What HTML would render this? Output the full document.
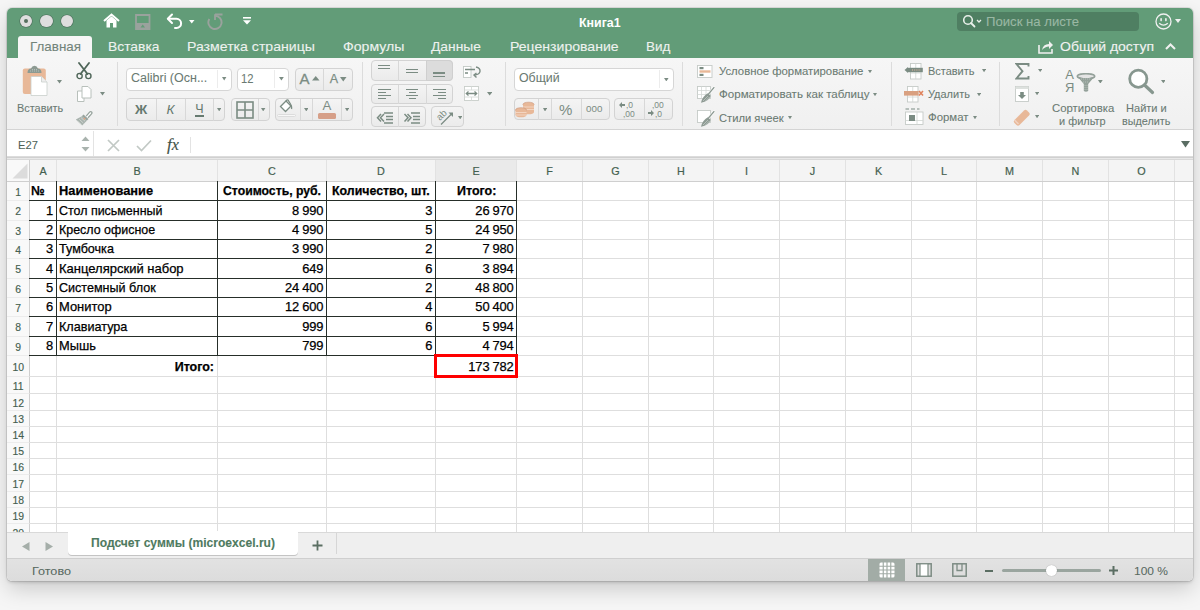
<!DOCTYPE html><html><head><meta charset="utf-8"><style>
html,body{margin:0;padding:0;width:1200px;height:610px;overflow:hidden;background:#f6f6f6;font-family:"Liberation Sans", sans-serif;}
#win{position:absolute;left:7px;top:8px;width:1186px;height:573px;border-radius:5px;box-shadow:0 0 0 1px rgba(0,0,0,0.09),0 2px 3px rgba(0,0,0,0.12),0 8px 22px rgba(0,0,0,0.18);overflow:hidden;background:#fff}
</style></head><body>
<div id="win"></div>

<div style="position:absolute;left:7px;top:8px;width:1186px;height:573px;border-radius:5px;overflow:hidden;">
<div style="position:absolute;left:-7px;top:-8px;width:1200px;height:610px;">
<div style="position:absolute;left:0px;top:0px;width:1200px;height:58px;background:#629c78;"></div>
<div style="position:absolute;left:19.8px;top:14.8px;width:12.4px;height:12.4px;background:#dedede;border-radius:50%;box-shadow:0 0 0 0.6px rgba(60,80,70,0.6);"></div>
<div style="position:absolute;left:40.3px;top:14.8px;width:12.4px;height:12.4px;background:#dedede;border-radius:50%;box-shadow:0 0 0 0.6px rgba(60,80,70,0.6);"></div>
<div style="position:absolute;left:60.8px;top:14.8px;width:12.4px;height:12.4px;background:#dedede;border-radius:50%;box-shadow:0 0 0 0.6px rgba(60,80,70,0.6);"></div>
<div style="position:absolute;left:24px;top:19px;width:4px;height:4px;background:#55705f;border-radius:50%;"></div>
<svg style="position:absolute;left:103px;top:13px;" width="17" height="15" viewBox="0 0 17 15"><path d="M1 8 L8.5 1.5 L16 8" fill="none" stroke="#fff" stroke-width="2"/><path d="M3.5 7.5 V14.5 H7 V10 H10 V14.5 H13.5 V7.5 L8.5 3.2 Z" fill="#fff"/></svg>
<svg style="position:absolute;left:134.5px;top:13.5px;" width="16" height="16" viewBox="0 0 16 16"><path d="M1 1 H14.5 V15 H1 Z" fill="none" stroke="#9aa29d" stroke-width="1.8"/><rect x="1" y="9" width="13.5" height="6" fill="#9aa29d"/><path d="M5.5 13.5 L7.75 10.5 L10 13.5 Z" fill="#629c78"/></svg>
<svg style="position:absolute;left:166px;top:13px;" width="18" height="16" viewBox="0 0 18 16"><path d="M6 1.5 L1.8 5.8 L6 10" fill="none" stroke="#fff" stroke-width="2" stroke-linecap="round" stroke-linejoin="round"/><path d="M2.5 5.8 H10.5 A4.6 4.6 0 0 1 10.5 15 H9" fill="none" stroke="#fff" stroke-width="2" stroke-linecap="round"/></svg>
<svg style="position:absolute;left:189px;top:20px;" width="6" height="4" viewBox="0 0 6 4"><path d="M0 0 H5.5 L2.75 3.5 Z" fill="#fff"/></svg>
<svg style="position:absolute;left:206px;top:13px;" width="18" height="17" viewBox="0 0 18 17"><path d="M9 2.8 A6.6 6.6 0 1 1 3.3 6" fill="none" stroke="#9aa29d" stroke-width="1.9"/><path d="M9 1.5 H16.5 M9 1.2 V7" fill="none" stroke="#9aa29d" stroke-width="1.8"/></svg>
<svg style="position:absolute;left:243px;top:17px;" width="8" height="8" viewBox="0 0 8 8"><rect x="0" y="0" width="8" height="1.6" fill="#fff"/><path d="M0 3.2 H8 L4 7.5 Z" fill="#fff"/></svg>
<div style="position:absolute;left:579.00px;top:12.50px;height:19px;line-height:19px;font-size:13.4px;color:#fff;font-weight:bold;white-space:nowrap;-webkit-text-stroke:0px #fff;transform:scaleX(0.9267);transform-origin:0 0;">Книга1</div>
<div style="position:absolute;left:957px;top:12px;width:182px;height:18.5px;background:#4f7f62;border-radius:4px;"></div>
<svg style="position:absolute;left:962px;top:14px;" width="24" height="14" viewBox="0 0 24 14"><circle cx="6" cy="6" r="4.3" fill="none" stroke="#e8efe9" stroke-width="1.6"/><path d="M9 9 L12.5 12.5" stroke="#e8efe9" stroke-width="1.8" stroke-linecap="round"/><path d="M15 6 L17 8 L19 6" fill="none" stroke="#e8efe9" stroke-width="1.3"/></svg>
<div style="position:absolute;left:986.00px;top:12.50px;height:18px;line-height:18px;font-size:12.6px;color:#9ab8a4;font-weight:normal;white-space:nowrap;-webkit-text-stroke:0.1px #9ab8a4;transform:scaleX(1.0425);transform-origin:0 0;">Поиск на листе</div>
<svg style="position:absolute;left:1155px;top:13px;" width="17" height="17" viewBox="0 0 17 17"><circle cx="8.5" cy="8.5" r="7.5" fill="none" stroke="#f0f0f0" stroke-width="1.3"/><rect x="5.3" y="5" width="1.6" height="3.4" rx="0.8" fill="#f0f0f0"/><rect x="10.1" y="5" width="1.6" height="3.4" rx="0.8" fill="#f0f0f0"/><path d="M4.2 10.3 Q8.5 14 12.8 10.3" fill="none" stroke="#f0f0f0" stroke-width="1.3"/></svg>
<svg style="position:absolute;left:1175px;top:19px;" width="6" height="5" viewBox="0 0 6 5"><path d="M0 0 H6 L3 4 Z" fill="#f0f0f0"/></svg>
<div style="position:absolute;left:18px;top:36px;width:74px;height:23px;background:#f6f6f6;border-radius:3px 3px 0 0;"></div>
<div style="position:absolute;left:29.50px;top:38.30px;height:18px;line-height:18px;font-size:12.6px;color:#72847a;font-weight:normal;white-space:nowrap;-webkit-text-stroke:0.1px #72847a;transform:scaleX(1.0635);transform-origin:0 0;">Главная</div>
<div style="position:absolute;left:107.50px;top:38.30px;height:18px;line-height:18px;font-size:12.6px;color:#eef2ef;font-weight:normal;white-space:nowrap;-webkit-text-stroke:0.1px #eef2ef;transform:scaleX(1.0993);transform-origin:0 0;">Вставка</div>
<div style="position:absolute;left:187.00px;top:38.30px;height:18px;line-height:18px;font-size:12.6px;color:#eef2ef;font-weight:normal;white-space:nowrap;-webkit-text-stroke:0.1px #eef2ef;transform:scaleX(1.1198);transform-origin:0 0;">Разметка страницы</div>
<div style="position:absolute;left:342.50px;top:38.30px;height:18px;line-height:18px;font-size:12.6px;color:#eef2ef;font-weight:normal;white-space:nowrap;-webkit-text-stroke:0.1px #eef2ef;transform:scaleX(1.1215);transform-origin:0 0;">Формулы</div>
<div style="position:absolute;left:431.00px;top:38.30px;height:18px;line-height:18px;font-size:12.6px;color:#eef2ef;font-weight:normal;white-space:nowrap;-webkit-text-stroke:0.1px #eef2ef;transform:scaleX(1.0983);transform-origin:0 0;">Данные</div>
<div style="position:absolute;left:509.70px;top:38.30px;height:18px;line-height:18px;font-size:12.6px;color:#eef2ef;font-weight:normal;white-space:nowrap;-webkit-text-stroke:0.1px #eef2ef;transform:scaleX(1.1172);transform-origin:0 0;">Рецензирование</div>
<div style="position:absolute;left:646.20px;top:38.30px;height:18px;line-height:18px;font-size:12.6px;color:#eef2ef;font-weight:normal;white-space:nowrap;-webkit-text-stroke:0.1px #eef2ef;transform:scaleX(1.0705);transform-origin:0 0;">Вид</div>
<svg style="position:absolute;left:1038px;top:39px;" width="16" height="15" viewBox="0 0 16 15"><path d="M1 6 V14 H14 V10" fill="none" stroke="#f0f0f0" stroke-width="1.6"/><path d="M4 11 Q5 5 11 5 V2 L15 6 L11 10 V7.5 Q7 7.5 4 11 Z" fill="#f0f0f0"/></svg>
<div style="position:absolute;left:1060.00px;top:38.30px;height:18px;line-height:18px;font-size:12.8px;color:#f2f2f2;font-weight:normal;white-space:nowrap;-webkit-text-stroke:0.12px #f2f2f2;transform:scaleX(1.0930);transform-origin:0 0;">Общий доступ</div>
<svg style="position:absolute;left:1165px;top:43px;" width="11" height="7" viewBox="0 0 11 7"><path d="M1 6 L5.5 1.5 L10 6" fill="none" stroke="#f0f0f0" stroke-width="2"/></svg>
<div style="position:absolute;left:0px;top:58px;width:1200px;height:72px;background:#f3f3f3;border-bottom:1px solid #d6d6d6;"></div>
<div style="position:absolute;left:0px;top:58px;width:1200px;height:71.5px;background:linear-gradient(#f6f6f6,#f0f0f0);"></div>
<div style="position:absolute;left:0px;top:129px;width:1200px;height:1px;background:#d4d4d4;"></div>
<svg style="position:absolute;left:22px;top:65px;" width="26" height="32" viewBox="0 0 26 32">
<rect x="0.8" y="3.5" width="23" height="25.5" rx="2" fill="#e8b898"/>
<path d="M5.5 8 Q5.5 3.5 9 3.5 Q10 0.8 12.5 0.8 Q15 0.8 16 3.5 Q19.5 3.5 19.5 8 Z" fill="#8c9a92"/><path d="M8 6 H17 M10 4.5 H15" stroke="#c8d0cb" stroke-width="0.7" stroke-dasharray="1 1"/>
<path d="M9 11.5 H19.5 L25 17 V30.5 H9 Z" fill="#fff" stroke="#c9cfcb" stroke-width="0.8"/>
<path d="M19.5 11.5 V17 H25" fill="#eee" stroke="#c9cfcb" stroke-width="0.8"/>
</svg>
<svg style="position:absolute;left:57px;top:80px;" width="5" height="3.6" viewBox="0 0 5 3.6"><path d="M0 0 H5 L2.5 3.6 Z" fill="#7b8c83"/></svg>
<div style="position:absolute;left:16.80px;top:101.30px;height:15px;line-height:15px;font-size:10.5px;color:#6a7a72;font-weight:normal;white-space:nowrap;-webkit-text-stroke:0.08px #6a7a72;transform:scaleX(1.0380);transform-origin:0 0;">Вставить</div>
<svg style="position:absolute;left:76px;top:62px;" width="16" height="18" viewBox="0 0 16 18">
<path d="M3 1 L11.5 12 M13 1 L4.5 12" stroke="#4f6659" stroke-width="1.8" stroke-linecap="round"/>
<circle cx="3.6" cy="14" r="2.6" fill="none" stroke="#4f6659" stroke-width="1.4"/>
<circle cx="12.4" cy="14" r="2.6" fill="none" stroke="#4f6659" stroke-width="1.4"/>
</svg>
<svg style="position:absolute;left:76px;top:85px;" width="17" height="18" viewBox="0 0 17 18">
<path d="M1.5 6 H8 V16.5 H1.5 Z" fill="#fff" stroke="#b8c0bb" stroke-width="1"/>
<path d="M6 1.5 H12 L15 4.5 V13 H6 Z" fill="#fff" stroke="#b8c0bb" stroke-width="1"/>
</svg>
<svg style="position:absolute;left:99.5px;top:92px;" width="5" height="3.6" viewBox="0 0 5 3.6"><path d="M0 0 H5 L2.5 3.6 Z" fill="#7b8c83"/></svg>
<svg style="position:absolute;left:75px;top:109px;" width="18" height="17" viewBox="0 0 18 17">
<path d="M11.2 7.2 L14.6 3.2 Q15.6 2 16.6 3 Q17.4 3.9 16.5 4.9 L13 8.8" fill="#fff" stroke="#98a49e" stroke-width="1.3"/>
<path d="M8.5 5.5 L13.5 10 L11.8 11.8 L6.8 7.2 Z" fill="#98a49e"/>
<path d="M6.8 7.2 L11.8 11.8 L7.2 16.5 L0.8 10.5 Z" fill="#a9b3ae"/>
<path d="M2.5 12 L6.5 15.5 M4.2 10.2 L8.3 14 M6 8.6 L10 12.2" stroke="#d5dad7" stroke-width="0.8"/>
<circle cx="9.5" cy="9.6" r="0.9" fill="#e8a27e"/>
</svg>
<div style="position:absolute;left:116.5px;top:62px;width:1px;height:64px;background:#dcdcdc;"></div>
<div style="position:absolute;left:126px;top:67.5px;width:105.5px;height:23px;background:#fff;border:1px solid #d6d6d6;border-radius:4px;box-sizing:border-box;"></div>
<div style="position:absolute;left:131.00px;top:70.40px;height:17px;line-height:17px;font-size:12px;color:#6a7a72;font-weight:normal;white-space:nowrap;-webkit-text-stroke:0.05px #6a7a72;transform:scaleX(1.0410);transform-origin:0 0;">Calibri (Осн...</div>
<div style="position:absolute;left:217px;top:70px;width:1px;height:18px;background:#ececec;"></div>
<svg style="position:absolute;left:222.3px;top:77.3px;" width="4.4" height="3.4" viewBox="0 0 4.4 3.4"><path d="M0 0 H4.4 L2.2 3.4 Z" fill="#7b8c83"/></svg>
<div style="position:absolute;left:236.5px;top:67.5px;width:52px;height:23px;background:#fff;border:1px solid #d6d6d6;border-radius:4px;box-sizing:border-box;"></div>
<div style="position:absolute;left:240.80px;top:70.50px;height:17px;line-height:17px;font-size:12px;color:#6a7a72;font-weight:normal;white-space:nowrap;-webkit-text-stroke:0.05px #6a7a72;transform:scaleX(0.9368);transform-origin:0 0;">12</div>
<div style="position:absolute;left:274.4px;top:70px;width:1px;height:18px;background:#ececec;"></div>
<svg style="position:absolute;left:279.3px;top:77px;" width="4.8" height="3.6" viewBox="0 0 4.8 3.6"><path d="M0 0 H4.8 L2.4 3.6 Z" fill="#7b8c83"/></svg>
<div style="position:absolute;left:294.5px;top:67.5px;width:58px;height:23px;background:linear-gradient(#f4f4f4,#ebebeb);border:1px solid #d3d3d3;border-radius:4px;box-sizing:border-box;"></div>
<div style="position:absolute;left:323.4px;top:68px;width:1px;height:22px;background:#d8d8d8;"></div>
<div style="position:absolute;left:4.5px;width:600px;text-align:center;top:68.1px;height:21px;line-height:21px;font-size:15px;color:#7b8c83;font-weight:normal;white-space:nowrap;-webkit-text-stroke:0.3px #7b8c83;">A</div>
<svg style="position:absolute;left:311.5px;top:75.8px;" width="8" height="5" viewBox="0 0 8 5"><path d="M0 4.5 H7.5 L3.75 0 Z" fill="#7b8c83"/></svg>
<div style="position:absolute;left:34px;width:600px;text-align:center;top:70.0px;height:18px;line-height:18px;font-size:12.5px;color:#7b8c83;font-weight:normal;white-space:nowrap;-webkit-text-stroke:0.25px #7b8c83;">A</div>
<svg style="position:absolute;left:339.8px;top:76.5px;" width="7" height="5" viewBox="0 0 7 5"><path d="M0 0 H6.5 L3.25 4.5 Z" fill="#7b8c83"/></svg>
<div style="position:absolute;left:126px;top:97.8px;width:98.5px;height:23px;background:linear-gradient(#f4f4f4,#ebebeb);border:1px solid #d3d3d3;border-radius:4px;box-sizing:border-box;"></div>
<div style="position:absolute;left:155.5px;top:98.5px;width:1px;height:22.0px;background:#d8d8d8;"></div>
<div style="position:absolute;left:184.5px;top:98.5px;width:1px;height:22.0px;background:#d8d8d8;"></div>
<div style="position:absolute;left:212.9px;top:98.5px;width:1px;height:22.0px;background:#d8d8d8;"></div>
<div style="position:absolute;left:-159px;width:600px;text-align:center;top:99.8px;height:19px;line-height:19px;font-size:13.5px;color:#667a70;font-weight:bold;white-space:nowrap;">Ж</div>
<div style="position:absolute;left:-129.5px;width:600px;text-align:center;top:99.8px;height:19px;line-height:19px;font-size:13.5px;color:#667a70;font-weight:normal;white-space:nowrap;font-style:italic;">К</div>
<div style="position:absolute;left:-100.5px;width:600px;text-align:center;top:99.5px;height:18px;line-height:18px;font-size:12.5px;color:#667a70;font-weight:normal;white-space:nowrap;">Ч</div>
<div style="position:absolute;left:195px;top:115.3px;width:9px;height:1.3px;background:#667a70;"></div>
<svg style="position:absolute;left:217px;top:107.5px;" width="4.4" height="3.4" viewBox="0 0 4.4 3.4"><path d="M0 0 H4.4 L2.2 3.4 Z" fill="#7b8c83"/></svg>
<div style="position:absolute;left:231px;top:98px;width:38.5px;height:22.5px;background:linear-gradient(#f4f4f4,#ebebeb);border:1px solid #d3d3d3;border-radius:4px;box-sizing:border-box;"></div>
<svg style="position:absolute;left:236px;top:100.5px;" width="18" height="18" viewBox="0 0 18 18"><rect x="1" y="1" width="16" height="16" fill="none" stroke="#7b8c83" stroke-width="1.6"/><path d="M9 1 V17 M1 9 H17" stroke="#7b8c83" stroke-width="1.6"/></svg>
<div style="position:absolute;left:257.6px;top:99px;width:1px;height:21px;background:#d8d8d8;"></div>
<svg style="position:absolute;left:261.4px;top:107.5px;" width="4.4" height="3.4" viewBox="0 0 4.4 3.4"><path d="M0 0 H4.4 L2.2 3.4 Z" fill="#7b8c83"/></svg>
<div style="position:absolute;left:275px;top:98px;width:77.5px;height:22.5px;background:linear-gradient(#f4f4f4,#ebebeb);border:1px solid #d3d3d3;border-radius:4px;box-sizing:border-box;"></div>
<svg style="position:absolute;left:278px;top:99px;" width="17" height="14" viewBox="0 0 17 14"><path d="M2.5 7.5 L8 2 L13 7 L7.5 12.5 Z" fill="#fff" stroke="#7b8c83" stroke-width="1.3"/><path d="M8 2 Q9 0.5 10 1 L12.5 5 Q14 7.5 13.5 10" fill="none" stroke="#7b8c83" stroke-width="1.3"/></svg>
<div style="position:absolute;left:277px;top:113.6px;width:18.5px;height:3.8px;background:#f7f7f7;border:1px solid #dcdcdc;border-radius:1.5px;box-sizing:border-box;"></div>
<div style="position:absolute;left:300.2px;top:99px;width:1px;height:21px;background:#d8d8d8;"></div>
<svg style="position:absolute;left:303.7px;top:107.5px;" width="4.6" height="3.4" viewBox="0 0 4.6 3.4"><path d="M0 0 H4.6 L2.3 3.4 Z" fill="#7b8c83"/></svg>
<div style="position:absolute;left:312.3px;top:99px;width:1px;height:21px;background:#d8d8d8;"></div>
<div style="position:absolute;left:26.80000000000001px;width:600px;text-align:center;top:97.2px;height:18px;line-height:18px;font-size:13.2px;color:#7b8c83;font-weight:normal;white-space:nowrap;">A</div>
<div style="position:absolute;left:317.8px;top:113px;width:17.8px;height:5.5px;background:#d69f88;border-radius:1.5px;"></div>
<div style="position:absolute;left:340.5px;top:99px;width:1px;height:21px;background:#d8d8d8;"></div>
<svg style="position:absolute;left:344.6px;top:107.5px;" width="4.2" height="3.4" viewBox="0 0 4.2 3.4"><path d="M0 0 H4.2 L2.1 3.4 Z" fill="#7b8c83"/></svg>
<div style="position:absolute;left:362px;top:62px;width:1px;height:64px;background:#dcdcdc;"></div>
<div style="position:absolute;left:371px;top:60.4px;width:81.6px;height:20.8px;background:linear-gradient(#f4f4f4,#ebebeb);border:1px solid #d3d3d3;border-radius:4px;box-sizing:border-box;"></div>
<div style="position:absolute;left:425.5px;top:60.4px;width:27.1px;height:20.8px;background:#dcdcdc;border:1px solid #cfcfcf;border-radius:0 4px 4px 0;box-sizing:border-box;"></div>
<div style="position:absolute;left:398px;top:61px;width:1px;height:19.5px;background:#d8d8d8;"></div>
<div style="position:absolute;left:378.2px;top:64.6px;width:12.2px;height:1.4px;background:#7b8c83;"></div>
<div style="position:absolute;left:378.2px;top:67.7px;width:12.2px;height:1.4px;background:#7b8c83;"></div>
<div style="position:absolute;left:405.7px;top:68.8px;width:12.2px;height:1.4px;background:#7b8c83;"></div>
<div style="position:absolute;left:405.7px;top:71.8px;width:12.2px;height:1.4px;background:#7b8c83;"></div>
<div style="position:absolute;left:433px;top:72.39999999999999px;width:12.2px;height:1.4px;background:#7b8c83;"></div>
<div style="position:absolute;left:433px;top:75.6px;width:12.2px;height:1.4px;background:#7b8c83;"></div>
<div style="position:absolute;left:371px;top:83.7px;width:81.6px;height:20.5px;background:linear-gradient(#f4f4f4,#ebebeb);border:1px solid #d3d3d3;border-radius:4px;box-sizing:border-box;"></div>
<div style="position:absolute;left:398px;top:84.5px;width:1px;height:19.0px;background:#d8d8d8;"></div>
<div style="position:absolute;left:425.5px;top:84.5px;width:1px;height:19.0px;background:#d8d8d8;"></div>
<div style="position:absolute;left:378px;top:88.6px;width:13px;height:1.4px;background:#7b8c83;"></div>
<div style="position:absolute;left:406.0px;top:88.6px;width:12px;height:1.4px;background:#7b8c83;"></div>
<div style="position:absolute;left:432.5px;top:88.6px;width:13px;height:1.4px;background:#7b8c83;"></div>
<div style="position:absolute;left:378px;top:91.7px;width:8px;height:1.4px;background:#7b8c83;"></div>
<div style="position:absolute;left:408.5px;top:91.7px;width:7px;height:1.4px;background:#7b8c83;"></div>
<div style="position:absolute;left:437.5px;top:91.7px;width:8px;height:1.4px;background:#7b8c83;"></div>
<div style="position:absolute;left:378px;top:94.8px;width:13px;height:1.4px;background:#7b8c83;"></div>
<div style="position:absolute;left:406.0px;top:94.8px;width:12px;height:1.4px;background:#7b8c83;"></div>
<div style="position:absolute;left:432.5px;top:94.8px;width:13px;height:1.4px;background:#7b8c83;"></div>
<div style="position:absolute;left:378px;top:97.8px;width:8px;height:1.4px;background:#7b8c83;"></div>
<div style="position:absolute;left:408.5px;top:97.8px;width:7px;height:1.4px;background:#7b8c83;"></div>
<div style="position:absolute;left:437.5px;top:97.8px;width:8px;height:1.4px;background:#7b8c83;"></div>
<div style="position:absolute;left:371px;top:106.4px;width:54.5px;height:20.8px;background:linear-gradient(#f4f4f4,#ebebeb);border:1px solid #d3d3d3;border-radius:4px;box-sizing:border-box;"></div>
<div style="position:absolute;left:398px;top:107px;width:1px;height:19.5px;background:#d8d8d8;"></div>
<svg style="position:absolute;left:376px;top:109px;" width="18" height="15" viewBox="0 0 18 15"><path d="M8 4 H17 M10 7.5 H17 M10 10.5 H17 M8 14 H17" stroke="#7b8c83" stroke-width="1.4"/>
<path d="M5 5 L1.5 8.8 L5 12.6 M8 5 L4.5 8.8 L8 12.6" fill="none" stroke="#7b8c83" stroke-width="1.5"/></svg>
<svg style="position:absolute;left:403px;top:109px;" width="18" height="15" viewBox="0 0 18 15"><path d="M8 4 H17 M10 7.5 H17 M10 10.5 H17 M8 14 H17" stroke="#7b8c83" stroke-width="1.4"/>
<path d="M1.5 5 L5 8.8 L1.5 12.6 M4.5 5 L8 8.8 L4.5 12.6" fill="none" stroke="#7b8c83" stroke-width="1.5"/></svg>
<div style="position:absolute;left:430.5px;top:106.4px;width:33.8px;height:20.8px;background:linear-gradient(#f4f4f4,#ebebeb);border:1px solid #d3d3d3;border-radius:4px;box-sizing:border-box;"></div>
<svg style="position:absolute;left:435px;top:108px;" width="22" height="18" viewBox="0 0 22 18"><text x="0" y="0" transform="translate(5,13) rotate(-45)" font-family="Liberation Sans" font-size="9.5" fill="#7b8c83">ab</text>
<path d="M6 16.5 L16.5 6" stroke="#7b8c83" stroke-width="1.3"/><path d="M13.5 4.5 H18 V9 Z" fill="#7b8c83"/></svg>
<svg style="position:absolute;left:458px;top:115.5px;" width="4.4" height="3.4" viewBox="0 0 4.4 3.4"><path d="M0 0 H4.4 L2.2 3.4 Z" fill="#7b8c83"/></svg>
<svg style="position:absolute;left:462.5px;top:65.5px;" width="19" height="12" viewBox="0 0 19 12"><rect x="0.5" y="0.5" width="7.5" height="11" fill="#fff" stroke="#c2c9c5" stroke-width="0.9"/>
<path d="M2 3.5 H12 M2 7 H5" stroke="#7b8c83" stroke-width="1.3"/>
<path d="M13 1 Q17.5 2 17 5.5 Q16.5 8.5 12 9" fill="none" stroke="#7b8c83" stroke-width="1.4"/><path d="M13.5 7 L11 9 L13.5 11.5" fill="none" stroke="#7b8c83" stroke-width="1.4"/></svg>
<svg style="position:absolute;left:464px;top:86px;" width="15" height="15" viewBox="0 0 15 15"><rect x="0.5" y="0.5" width="14" height="14" fill="#fff" stroke="#c8cec9" stroke-width="0.9"/>
<path d="M7.5 0.5 V4 M7.5 11 V14.5 M0.5 11 H14.5 M0.5 4 H14.5" stroke="#d7dbd8" stroke-width="0.9"/>
<path d="M3 7.5 H12" stroke="#7b8c83" stroke-width="1.4"/><path d="M4.5 5.5 L2.3 7.5 L4.5 9.5 M10.5 5.5 L12.7 7.5 L10.5 9.5" fill="none" stroke="#7b8c83" stroke-width="1.3"/></svg>
<svg style="position:absolute;left:486.6px;top:92.2px;" width="5.3" height="3.6" viewBox="0 0 5.3 3.6"><path d="M0 0 H5.3 L2.65 3.6 Z" fill="#7b8c83"/></svg>
<div style="position:absolute;left:504.5px;top:62px;width:1px;height:64px;background:#dcdcdc;"></div>
<div style="position:absolute;left:513.5px;top:67.5px;width:160px;height:23.2px;background:#fff;border:1px solid #d6d6d6;border-radius:4px;box-sizing:border-box;"></div>
<div style="position:absolute;left:518.60px;top:70.30px;height:17px;line-height:17px;font-size:12px;color:#6a7a72;font-weight:normal;white-space:nowrap;-webkit-text-stroke:0.05px #6a7a72;transform:scaleX(1.0281);transform-origin:0 0;">Общий</div>
<div style="position:absolute;left:659.4px;top:70px;width:1px;height:18px;background:#ececec;"></div>
<svg style="position:absolute;left:664px;top:77.5px;" width="4.6" height="3.4" viewBox="0 0 4.6 3.4"><path d="M0 0 H4.6 L2.3 3.4 Z" fill="#7b8c83"/></svg>
<div style="position:absolute;left:513.5px;top:97.8px;width:96px;height:22.6px;background:linear-gradient(#f4f4f4,#ebebeb);border:1px solid #d3d3d3;border-radius:4px;box-sizing:border-box;"></div>
<svg style="position:absolute;left:515px;top:101px;" width="20" height="17" viewBox="0 0 20 17"><ellipse cx="13.5" cy="3.5" rx="5.5" ry="2.3" fill="#e8b898" stroke="#c9957a" stroke-width="0.6"/>
<rect x="8" y="3.5" width="11" height="7.5" fill="#e8b898"/><ellipse cx="13.5" cy="11" rx="5.5" ry="2.3" fill="#e8b898"/>
<path d="M8 6 H19 M8 8.5 H19" stroke="#f5dccb" stroke-width="0.8"/>
<ellipse cx="6" cy="9" rx="5.5" ry="2.3" fill="#e8b898" stroke="#c9957a" stroke-width="0.6"/>
<rect x="0.5" y="9" width="11" height="5" fill="#e8b898"/><ellipse cx="6" cy="14" rx="5.5" ry="2.3" fill="#e8b898"/>
<path d="M0.5 11.5 H11.5 M0.5 14 H11.5" stroke="#f5dccb" stroke-width="0.8"/></svg>
<div style="position:absolute;left:538.1px;top:98.5px;width:1px;height:21.5px;background:#d8d8d8;"></div>
<svg style="position:absolute;left:542.8px;top:107.5px;" width="4.1" height="3.6" viewBox="0 0 4.1 3.6"><path d="M0 0 H4.1 L2.05 3.6 Z" fill="#7b8c83"/></svg>
<div style="position:absolute;left:550.9px;top:98.5px;width:1px;height:21.5px;background:#d8d8d8;"></div>
<div style="position:absolute;left:265.6px;width:600px;text-align:center;top:98.8px;height:21px;line-height:21px;font-size:15px;color:#7b8c83;font-weight:normal;white-space:nowrap;">%</div>
<div style="position:absolute;left:580.5px;top:98.5px;width:1px;height:21.5px;background:#d8d8d8;"></div>
<div style="position:absolute;left:294.29999999999995px;width:600px;text-align:center;top:102.3px;height:14px;line-height:14px;font-size:9.8px;color:#7b8c83;font-weight:normal;white-space:nowrap;">000</div>
<div style="position:absolute;left:614.4px;top:97.8px;width:59px;height:22.6px;background:linear-gradient(#f4f4f4,#ebebeb);border:1px solid #d3d3d3;border-radius:4px;box-sizing:border-box;"></div>
<div style="position:absolute;left:644px;top:98.5px;width:1px;height:21.5px;background:#d8d8d8;"></div>
<svg style="position:absolute;left:617px;top:99px;" width="25" height="20" viewBox="0 0 25 20"><path d="M2 6 L5 3 L5 9 Z M5 5 H8 V7 H5" fill="#7b8c83"/>
<text x="9" y="9" font-family="Liberation Sans" font-size="8.5" fill="#7b8c83">,0</text>
<text x="6" y="17.5" font-family="Liberation Sans" font-size="8.5" fill="#7b8c83">,00</text></svg>
<svg style="position:absolute;left:646px;top:99px;" width="25" height="20" viewBox="0 0 25 20"><text x="6" y="9" font-family="Liberation Sans" font-size="8.5" fill="#7b8c83">,00</text>
<path d="M8 14 L5 11 L5 17 Z M2 13 H5 V15 H2" fill="#7b8c83"/>
<text x="9" y="17.5" font-family="Liberation Sans" font-size="8.5" fill="#7b8c83">,0</text></svg>
<div style="position:absolute;left:682.2px;top:62px;width:1px;height:64px;background:#dcdcdc;"></div>
<svg style="position:absolute;left:697px;top:65px;" width="16" height="13" viewBox="0 0 16 13"><rect x="0.5" y="0.5" width="14.5" height="12" fill="#fff" stroke="#c5cbc7" stroke-width="0.9"/>
<rect x="2.5" y="2" width="4" height="2.2" fill="#7b8c83"/><rect x="2.5" y="5.3" width="11" height="2.4" fill="#e8b898"/><rect x="2.5" y="8.8" width="4" height="2.2" fill="#7b8c83"/></svg>
<div style="position:absolute;left:718.70px;top:64.20px;height:15px;line-height:15px;font-size:10.5px;color:#6a7a72;font-weight:normal;white-space:nowrap;-webkit-text-stroke:0.08px #6a7a72;transform:scaleX(1.0802);transform-origin:0 0;">Условное форматирование</div>
<svg style="position:absolute;left:867.5px;top:69.6px;" width="4" height="3.2" viewBox="0 0 4 3.2"><path d="M0 0 H4 L2.0 3.2 Z" fill="#7b8c83"/></svg>
<svg style="position:absolute;left:697px;top:86px;" width="18" height="17" viewBox="0 0 18 17"><rect x="0.5" y="0.5" width="13" height="12" fill="#fff" stroke="#c5cbc7" stroke-width="0.9"/>
<path d="M0.5 4.5 H13.5 M0.5 8.5 H13.5 M4.5 0.5 V12.5 M9 0.5 V12.5" stroke="#d3d8d5" stroke-width="0.8"/>
<path d="M17 1.5 L11.5 8" stroke="#fff" stroke-width="2.6" stroke-linecap="round"/><path d="M17 1.5 L11.5 8" stroke="#8d9a93" stroke-width="1.2" stroke-linecap="round"/><path d="M10.8 7.2 L13.6 9.8 Q12 15.5 4 16.8 Q5.5 10 10.8 7.2 Z" fill="#8d9a93"/><path d="M6 15 L11 10 M8 15.5 L12.2 11.2" stroke="#c9d0cc" stroke-width="0.7"/></svg>
<div style="position:absolute;left:718.70px;top:87.20px;height:15px;line-height:15px;font-size:10.5px;color:#6a7a72;font-weight:normal;white-space:nowrap;-webkit-text-stroke:0.08px #6a7a72;transform:scaleX(1.1016);transform-origin:0 0;">Форматировать как таблицу</div>
<svg style="position:absolute;left:873.3px;top:93px;" width="4" height="3.2" viewBox="0 0 4 3.2"><path d="M0 0 H4 L2.0 3.2 Z" fill="#7b8c83"/></svg>
<svg style="position:absolute;left:697px;top:109.5px;" width="18" height="17" viewBox="0 0 18 17"><rect x="0.5" y="0.5" width="13" height="12" fill="#fff" stroke="#c5cbc7" stroke-width="0.9"/>
<path d="M17 1.5 L11.5 8" stroke="#fff" stroke-width="2.6" stroke-linecap="round"/><path d="M17 1.5 L11.5 8" stroke="#8d9a93" stroke-width="1.2" stroke-linecap="round"/><path d="M10.8 7.2 L13.6 9.8 Q12 15.5 4 16.8 Q5.5 10 10.8 7.2 Z" fill="#8d9a93"/><path d="M6 15 L11 10 M8 15.5 L12.2 11.2" stroke="#c9d0cc" stroke-width="0.7"/></svg>
<div style="position:absolute;left:718.70px;top:110.50px;height:15px;line-height:15px;font-size:10.5px;color:#6a7a72;font-weight:normal;white-space:nowrap;-webkit-text-stroke:0.08px #6a7a72;transform:scaleX(1.0650);transform-origin:0 0;">Стили ячеек</div>
<svg style="position:absolute;left:787.5px;top:116.3px;" width="4" height="3.2" viewBox="0 0 4 3.2"><path d="M0 0 H4 L2.0 3.2 Z" fill="#7b8c83"/></svg>
<div style="position:absolute;left:890.75px;top:62px;width:1px;height:64px;background:#dcdcdc;"></div>
<svg style="position:absolute;left:904px;top:62.5px;" width="20" height="17" viewBox="0 0 20 17"><rect x="6.5" y="0.5" width="10.5" height="15.5" fill="#fff" stroke="#c5cbc7" stroke-width="0.9"/>
<path d="M11.75 0.5 V16 M6.5 10 H17" stroke="#d0d5d2" stroke-width="0.8"/>
<rect x="4" y="4.8" width="14.8" height="4.4" fill="#7b8c83"/><path d="M0.5 7 L4 4 V10 Z" fill="#7b8c83"/>
<path d="M8 7 H17" stroke="#e8b898" stroke-width="1" stroke-dasharray="1 1.2"/></svg>
<div style="position:absolute;left:927.50px;top:63.70px;height:15px;line-height:15px;font-size:10.5px;color:#6a7a72;font-weight:normal;white-space:nowrap;-webkit-text-stroke:0.08px #6a7a72;transform:scaleX(1.0425);transform-origin:0 0;">Вставить</div>
<svg style="position:absolute;left:982.4px;top:69.3px;" width="4.1" height="3.3" viewBox="0 0 4.1 3.3"><path d="M0 0 H4.1 L2.05 3.3 Z" fill="#7b8c83"/></svg>
<svg style="position:absolute;left:904px;top:85.5px;" width="20" height="17" viewBox="0 0 20 17"><rect x="3.5" y="0.5" width="10.5" height="15.5" fill="#fff" stroke="#c5cbc7" stroke-width="0.9"/>
<path d="M8.75 0.5 V16 M3.5 11 H14" stroke="#d0d5d2" stroke-width="0.8"/>
<rect x="0" y="5" width="14.5" height="4.6" fill="#d9a080"/>
<path d="M15 5 L19 9.5 M19 5 L15 9.5" stroke="#e0845e" stroke-width="1.6"/></svg>
<div style="position:absolute;left:927.50px;top:86.50px;height:15px;line-height:15px;font-size:10.5px;color:#6a7a72;font-weight:normal;white-space:nowrap;-webkit-text-stroke:0.08px #6a7a72;transform:scaleX(1.0452);transform-origin:0 0;">Удалить</div>
<svg style="position:absolute;left:977px;top:92.5px;" width="4.2" height="3.3" viewBox="0 0 4.2 3.3"><path d="M0 0 H4.2 L2.1 3.3 Z" fill="#7b8c83"/></svg>
<svg style="position:absolute;left:904.5px;top:108px;" width="19" height="17" viewBox="0 0 19 17"><path d="M0.5 1 H4 M6 1 H10 M12 1 H14.5" stroke="#7b8c83" stroke-width="1.2"/>
<rect x="0.5" y="4" width="17.5" height="12.5" fill="#fff" stroke="#c5cbc7" stroke-width="0.9"/>
<path d="M12 4 V16.5 M0.5 12.5 H18" stroke="#d0d5d2" stroke-width="0.8"/>
<rect x="4" y="7" width="6" height="6" fill="#7b8c83"/></svg>
<div style="position:absolute;left:927.50px;top:110.10px;height:15px;line-height:15px;font-size:10.5px;color:#6a7a72;font-weight:normal;white-space:nowrap;-webkit-text-stroke:0.08px #6a7a72;transform:scaleX(1.0859);transform-origin:0 0;">Формат</div>
<svg style="position:absolute;left:973.2px;top:116px;" width="4" height="3.3" viewBox="0 0 4 3.3"><path d="M0 0 H4 L2.0 3.3 Z" fill="#7b8c83"/></svg>
<div style="position:absolute;left:999px;top:62px;width:1px;height:64px;background:#dcdcdc;"></div>
<svg style="position:absolute;left:1015px;top:62.5px;" width="15" height="17" viewBox="0 0 15 17"><path d="M13.5 3.5 V1 H1.5 L7.5 8.2 L1.5 15.5 H13.5 V13" fill="none" stroke="#7b8c83" stroke-width="1.9" stroke-linejoin="miter"/></svg>
<svg style="position:absolute;left:1037.5px;top:69.2px;" width="4.4" height="3" viewBox="0 0 4.4 3"><path d="M0 0 H4.4 L2.2 3 Z" fill="#7b8c83"/></svg>
<svg style="position:absolute;left:1015px;top:86px;" width="14" height="16" viewBox="0 0 14 16"><rect x="0.5" y="0.5" width="13" height="15" fill="#fff" stroke="#c5cbc7" stroke-width="0.9"/>
<rect x="0.5" y="0.5" width="13" height="2.5" fill="#dde1de"/>
<path d="M5.2 6 H8.8 V9 H11 L7 13 L3 9 H5.2 Z" fill="#7b8c83"/></svg>
<svg style="position:absolute;left:1034.8px;top:92px;" width="4.2" height="3.3" viewBox="0 0 4.2 3.3"><path d="M0 0 H4.2 L2.1 3.3 Z" fill="#7b8c83"/></svg>
<svg style="position:absolute;left:1013px;top:108px;" width="18" height="18" viewBox="0 0 18 18"><path d="M1.5 12 L11 2.5 Q12.5 1 14 2.5 L16 4.5 Q17.5 6 16 7.5 L6.5 17 Q5 18.5 3.5 17 L1.5 15 Q0 13.5 1.5 12 Z" fill="#e8b898"/>
<path d="M1.5 12 L5.5 16" stroke="#f1d4c3" stroke-width="1.5"/></svg>
<svg style="position:absolute;left:1034.8px;top:115px;" width="4.2" height="3.3" viewBox="0 0 4.2 3.3"><path d="M0 0 H4.2 L2.1 3.3 Z" fill="#7b8c83"/></svg>
<div style="position:absolute;left:769.5px;width:600px;text-align:center;top:66.2px;height:18px;line-height:18px;font-size:13px;color:#7b8c83;font-weight:normal;white-space:nowrap;">А</div>
<div style="position:absolute;left:769.7px;width:600px;text-align:center;top:79.4px;height:18px;line-height:18px;font-size:13px;color:#7b8c83;font-weight:normal;white-space:nowrap;">Я</div>
<svg style="position:absolute;left:1076px;top:72.5px;" width="20" height="20" viewBox="0 0 20 20"><ellipse cx="10" cy="3.3" rx="8.8" ry="2.6" fill="#e4e4e4" stroke="#94a19a" stroke-width="1.5"/>
<path d="M1.2 3.3 L7.8 11 V18 Q10 19.3 12.2 18 V11 L18.8 3.3 Q10 7 1.2 3.3 Z" fill="#94a19a"/><path d="M5 6 L15 6 M7 9 H13 M9 12 V17 M11 12 V17" stroke="#c4ccc7" stroke-width="0.7" stroke-dasharray="1 1"/></svg>
<svg style="position:absolute;left:1098px;top:79.8px;" width="4.7" height="3.6" viewBox="0 0 4.7 3.6"><path d="M0 0 H4.7 L2.35 3.6 Z" fill="#7b8c83"/></svg>
<div style="position:absolute;left:1051.70px;top:101.20px;height:15px;line-height:15px;font-size:10.5px;color:#6a7a72;font-weight:normal;white-space:nowrap;-webkit-text-stroke:0.08px #6a7a72;transform:scaleX(1.0827);transform-origin:0 0;">Сортировка</div>
<div style="position:absolute;left:1059.30px;top:113.60px;height:15px;line-height:15px;font-size:10.5px;color:#6a7a72;font-weight:normal;white-space:nowrap;-webkit-text-stroke:0.08px #6a7a72;transform:scaleX(1.0423);transform-origin:0 0;">и фильтр</div>
<svg style="position:absolute;left:1126px;top:67px;" width="30" height="28" viewBox="0 0 30 28"><circle cx="12.3" cy="11.7" r="8.6" fill="#fff" stroke="#87978f" stroke-width="2.8"/>
<path d="M18.5 18 L26.5 25.5" stroke="#87978f" stroke-width="3.2" stroke-linecap="round"/></svg>
<svg style="position:absolute;left:1160.8px;top:80.2px;" width="4.7" height="3.2" viewBox="0 0 4.7 3.2"><path d="M0 0 H4.7 L2.35 3.2 Z" fill="#7b8c83"/></svg>
<div style="position:absolute;left:1125.80px;top:101.20px;height:15px;line-height:15px;font-size:10.5px;color:#6a7a72;font-weight:normal;white-space:nowrap;-webkit-text-stroke:0.08px #6a7a72;transform:scaleX(1.0530);transform-origin:0 0;">Найти и</div>
<div style="position:absolute;left:1121.70px;top:113.60px;height:15px;line-height:15px;font-size:10.5px;color:#6a7a72;font-weight:normal;white-space:nowrap;-webkit-text-stroke:0.08px #6a7a72;transform:scaleX(1.0294);transform-origin:0 0;">выделить</div>
<div style="position:absolute;left:0px;top:130px;width:1200px;height:26.5px;background:#fff;"></div>
<div style="position:absolute;left:17.50px;top:137.00px;height:16px;line-height:16px;font-size:11.5px;color:#4d5f56;font-weight:normal;white-space:nowrap;-webkit-text-stroke:0.05px #4d5f56;transform:scaleX(0.9776);transform-origin:0 0;">E27</div>
<svg style="position:absolute;left:81px;top:136px;" width="9" height="16" viewBox="0 0 9 16"><path d="M0.5 5 L4.5 0.5 L8.5 5 Z" fill="#a9b3ae"/><path d="M0.5 11 L4.5 15.5 L8.5 11 Z" fill="#a9b3ae"/></svg>
<div style="position:absolute;left:93px;top:131px;width:1px;height:25px;background:#e3e3e3;"></div>
<svg style="position:absolute;left:107px;top:138.5px;" width="13" height="13" viewBox="0 0 13 13"><path d="M1 1 L12 12 M12 1 L1 12" stroke="#c2c9c5" stroke-width="1.7"/></svg>
<svg style="position:absolute;left:135.5px;top:138.5px;" width="16" height="13" viewBox="0 0 16 13"><path d="M1 7 L5.5 11.5 L15 1.5" fill="none" stroke="#c2c9c5" stroke-width="1.7"/></svg>
<div style="position:absolute;left:167px;top:134.5px;font-family:'Liberation Serif',serif;font-style:italic;font-size:17px;line-height:20px;color:#3f5247;letter-spacing:0px;-webkit-text-stroke:0.15px #3f5247;">f<span style="font-size:16px;">x</span></div>
<div style="position:absolute;left:190px;top:137px;width:1px;height:16px;background:#e3e3e3;"></div>
<svg style="position:absolute;left:1181px;top:141px;" width="9" height="7" viewBox="0 0 9 7"><path d="M0 0 H9 L4.5 6.5 Z" fill="#5a6d63"/></svg>
<div style="position:absolute;left:0px;top:156px;width:1200px;height:1px;background:#dcdcdc;"></div>
<div style="position:absolute;left:0px;top:157px;width:1200px;height:1px;background:#d0d0d0;"></div>
<div style="position:absolute;left:0px;top:158px;width:1200px;height:1px;background:#e8e8e8;"></div>
<div style="position:absolute;left:0px;top:159px;width:1200px;height:1px;background:#d8d8d8;"></div>
<div style="position:absolute;left:0px;top:160px;width:1200px;height:372px;background:#fff;"></div>
<div style="position:absolute;left:0px;top:160px;width:1200px;height:21px;background:#f4f4f4;"></div>
<div style="position:absolute;left:0px;top:160px;width:29px;height:372px;background:#f9f9f9;"></div>
<div style="position:absolute;left:436px;top:160px;width:80px;height:21px;background:#eaeaea;"></div>
<svg style="position:absolute;left:12px;top:163px;" width="16" height="16" viewBox="0 0 16 16"><path d="M15.5 0.5 V15.5 H0.5 Z" fill="#dcdcdc"/></svg>
<div style="position:absolute;left:29px;top:160px;width:1px;height:372px;background:#cfcfcf;"></div>
<div style="position:absolute;left:56px;top:160px;width:1px;height:372px;background:#dedede;"></div>
<div style="position:absolute;left:217px;top:160px;width:1px;height:372px;background:#dedede;"></div>
<div style="position:absolute;left:326px;top:160px;width:1px;height:372px;background:#dedede;"></div>
<div style="position:absolute;left:435px;top:160px;width:1px;height:372px;background:#dedede;"></div>
<div style="position:absolute;left:516px;top:160px;width:1px;height:372px;background:#dedede;"></div>
<div style="position:absolute;left:582px;top:160px;width:1px;height:372px;background:#dedede;"></div>
<div style="position:absolute;left:648px;top:160px;width:1px;height:372px;background:#dedede;"></div>
<div style="position:absolute;left:713px;top:160px;width:1px;height:372px;background:#dedede;"></div>
<div style="position:absolute;left:779px;top:160px;width:1px;height:372px;background:#dedede;"></div>
<div style="position:absolute;left:845px;top:160px;width:1px;height:372px;background:#dedede;"></div>
<div style="position:absolute;left:911px;top:160px;width:1px;height:372px;background:#dedede;"></div>
<div style="position:absolute;left:976px;top:160px;width:1px;height:372px;background:#dedede;"></div>
<div style="position:absolute;left:1042px;top:160px;width:1px;height:372px;background:#dedede;"></div>
<div style="position:absolute;left:1108px;top:160px;width:1px;height:372px;background:#dedede;"></div>
<div style="position:absolute;left:1174px;top:160px;width:1px;height:372px;background:#dedede;"></div>
<div style="position:absolute;left:56px;top:160px;width:1px;height:21px;background:#e2e2e2;"></div>
<div style="position:absolute;left:217px;top:160px;width:1px;height:21px;background:#e2e2e2;"></div>
<div style="position:absolute;left:326px;top:160px;width:1px;height:21px;background:#e2e2e2;"></div>
<div style="position:absolute;left:435px;top:160px;width:1px;height:21px;background:#e2e2e2;"></div>
<div style="position:absolute;left:516px;top:160px;width:1px;height:21px;background:#e2e2e2;"></div>
<div style="position:absolute;left:582px;top:160px;width:1px;height:21px;background:#e2e2e2;"></div>
<div style="position:absolute;left:648px;top:160px;width:1px;height:21px;background:#e2e2e2;"></div>
<div style="position:absolute;left:713px;top:160px;width:1px;height:21px;background:#e2e2e2;"></div>
<div style="position:absolute;left:779px;top:160px;width:1px;height:21px;background:#e2e2e2;"></div>
<div style="position:absolute;left:845px;top:160px;width:1px;height:21px;background:#e2e2e2;"></div>
<div style="position:absolute;left:911px;top:160px;width:1px;height:21px;background:#e2e2e2;"></div>
<div style="position:absolute;left:976px;top:160px;width:1px;height:21px;background:#e2e2e2;"></div>
<div style="position:absolute;left:1042px;top:160px;width:1px;height:21px;background:#e2e2e2;"></div>
<div style="position:absolute;left:1108px;top:160px;width:1px;height:21px;background:#e2e2e2;"></div>
<div style="position:absolute;left:1174px;top:160px;width:1px;height:21px;background:#e2e2e2;"></div>
<div style="position:absolute;left:0px;top:181px;width:1200px;height:1px;background:#cfcfcf;"></div>
<div style="position:absolute;left:29px;top:200px;width:1171px;height:1px;background:#dedede;"></div>
<div style="position:absolute;left:7px;top:200px;width:22px;height:1px;background:#ececec;"></div>
<div style="position:absolute;left:29px;top:220px;width:1171px;height:1px;background:#dedede;"></div>
<div style="position:absolute;left:7px;top:220px;width:22px;height:1px;background:#ececec;"></div>
<div style="position:absolute;left:29px;top:239px;width:1171px;height:1px;background:#dedede;"></div>
<div style="position:absolute;left:7px;top:239px;width:22px;height:1px;background:#ececec;"></div>
<div style="position:absolute;left:29px;top:258px;width:1171px;height:1px;background:#dedede;"></div>
<div style="position:absolute;left:7px;top:258px;width:22px;height:1px;background:#ececec;"></div>
<div style="position:absolute;left:29px;top:278px;width:1171px;height:1px;background:#dedede;"></div>
<div style="position:absolute;left:7px;top:278px;width:22px;height:1px;background:#ececec;"></div>
<div style="position:absolute;left:29px;top:297px;width:1171px;height:1px;background:#dedede;"></div>
<div style="position:absolute;left:7px;top:297px;width:22px;height:1px;background:#ececec;"></div>
<div style="position:absolute;left:29px;top:316px;width:1171px;height:1px;background:#dedede;"></div>
<div style="position:absolute;left:7px;top:316px;width:22px;height:1px;background:#ececec;"></div>
<div style="position:absolute;left:29px;top:336px;width:1171px;height:1px;background:#dedede;"></div>
<div style="position:absolute;left:7px;top:336px;width:22px;height:1px;background:#ececec;"></div>
<div style="position:absolute;left:29px;top:355px;width:1171px;height:1px;background:#dedede;"></div>
<div style="position:absolute;left:7px;top:355px;width:22px;height:1px;background:#ececec;"></div>
<div style="position:absolute;left:29px;top:376px;width:1171px;height:1px;background:#dedede;"></div>
<div style="position:absolute;left:7px;top:376px;width:22px;height:1px;background:#ececec;"></div>
<div style="position:absolute;left:29px;top:393px;width:1171px;height:1px;background:#dedede;"></div>
<div style="position:absolute;left:7px;top:393px;width:22px;height:1px;background:#ececec;"></div>
<div style="position:absolute;left:29px;top:410px;width:1171px;height:1px;background:#dedede;"></div>
<div style="position:absolute;left:7px;top:410px;width:22px;height:1px;background:#ececec;"></div>
<div style="position:absolute;left:29px;top:426px;width:1171px;height:1px;background:#dedede;"></div>
<div style="position:absolute;left:7px;top:426px;width:22px;height:1px;background:#ececec;"></div>
<div style="position:absolute;left:29px;top:442px;width:1171px;height:1px;background:#dedede;"></div>
<div style="position:absolute;left:7px;top:442px;width:22px;height:1px;background:#ececec;"></div>
<div style="position:absolute;left:29px;top:458px;width:1171px;height:1px;background:#dedede;"></div>
<div style="position:absolute;left:7px;top:458px;width:22px;height:1px;background:#ececec;"></div>
<div style="position:absolute;left:29px;top:474px;width:1171px;height:1px;background:#dedede;"></div>
<div style="position:absolute;left:7px;top:474px;width:22px;height:1px;background:#ececec;"></div>
<div style="position:absolute;left:29px;top:491px;width:1171px;height:1px;background:#dedede;"></div>
<div style="position:absolute;left:7px;top:491px;width:22px;height:1px;background:#ececec;"></div>
<div style="position:absolute;left:29px;top:507px;width:1171px;height:1px;background:#dedede;"></div>
<div style="position:absolute;left:7px;top:507px;width:22px;height:1px;background:#ececec;"></div>
<div style="position:absolute;left:29px;top:523px;width:1171px;height:1px;background:#dedede;"></div>
<div style="position:absolute;left:7px;top:523px;width:22px;height:1px;background:#ececec;"></div>
<div style="position:absolute;left:29px;top:540px;width:1171px;height:1px;background:#dedede;"></div>
<div style="position:absolute;left:7px;top:540px;width:22px;height:1px;background:#ececec;"></div>
<div style="position:absolute;left:-257.0px;width:600px;text-align:center;top:163.5px;height:15px;line-height:15px;font-size:10.8px;color:#44604f;font-weight:normal;white-space:nowrap;-webkit-text-stroke:0.2px #44604f;">A</div>
<div style="position:absolute;left:-163.0px;width:600px;text-align:center;top:163.5px;height:15px;line-height:15px;font-size:10.8px;color:#44604f;font-weight:normal;white-space:nowrap;-webkit-text-stroke:0.2px #44604f;">B</div>
<div style="position:absolute;left:-28.0px;width:600px;text-align:center;top:163.5px;height:15px;line-height:15px;font-size:10.8px;color:#44604f;font-weight:normal;white-space:nowrap;-webkit-text-stroke:0.2px #44604f;">C</div>
<div style="position:absolute;left:81.0px;width:600px;text-align:center;top:163.5px;height:15px;line-height:15px;font-size:10.8px;color:#44604f;font-weight:normal;white-space:nowrap;-webkit-text-stroke:0.2px #44604f;">D</div>
<div style="position:absolute;left:176.0px;width:600px;text-align:center;top:163.5px;height:15px;line-height:15px;font-size:10.8px;color:#44604f;font-weight:normal;white-space:nowrap;-webkit-text-stroke:0.2px #44604f;">E</div>
<div style="position:absolute;left:249.5px;width:600px;text-align:center;top:163.5px;height:15px;line-height:15px;font-size:10.8px;color:#44604f;font-weight:normal;white-space:nowrap;-webkit-text-stroke:0.2px #44604f;">F</div>
<div style="position:absolute;left:315.5px;width:600px;text-align:center;top:163.5px;height:15px;line-height:15px;font-size:10.8px;color:#44604f;font-weight:normal;white-space:nowrap;-webkit-text-stroke:0.2px #44604f;">G</div>
<div style="position:absolute;left:381.0px;width:600px;text-align:center;top:163.5px;height:15px;line-height:15px;font-size:10.8px;color:#44604f;font-weight:normal;white-space:nowrap;-webkit-text-stroke:0.2px #44604f;">H</div>
<div style="position:absolute;left:446.5px;width:600px;text-align:center;top:163.5px;height:15px;line-height:15px;font-size:10.8px;color:#44604f;font-weight:normal;white-space:nowrap;-webkit-text-stroke:0.2px #44604f;">I</div>
<div style="position:absolute;left:512.5px;width:600px;text-align:center;top:163.5px;height:15px;line-height:15px;font-size:10.8px;color:#44604f;font-weight:normal;white-space:nowrap;-webkit-text-stroke:0.2px #44604f;">J</div>
<div style="position:absolute;left:578.5px;width:600px;text-align:center;top:163.5px;height:15px;line-height:15px;font-size:10.8px;color:#44604f;font-weight:normal;white-space:nowrap;-webkit-text-stroke:0.2px #44604f;">K</div>
<div style="position:absolute;left:644.0px;width:600px;text-align:center;top:163.5px;height:15px;line-height:15px;font-size:10.8px;color:#44604f;font-weight:normal;white-space:nowrap;-webkit-text-stroke:0.2px #44604f;">L</div>
<div style="position:absolute;left:709.5px;width:600px;text-align:center;top:163.5px;height:15px;line-height:15px;font-size:10.8px;color:#44604f;font-weight:normal;white-space:nowrap;-webkit-text-stroke:0.2px #44604f;">M</div>
<div style="position:absolute;left:775.5px;width:600px;text-align:center;top:163.5px;height:15px;line-height:15px;font-size:10.8px;color:#44604f;font-weight:normal;white-space:nowrap;-webkit-text-stroke:0.2px #44604f;">N</div>
<div style="position:absolute;left:841.5px;width:600px;text-align:center;top:163.5px;height:15px;line-height:15px;font-size:10.8px;color:#44604f;font-weight:normal;white-space:nowrap;-webkit-text-stroke:0.2px #44604f;">O</div>
<div style="position:absolute;left:-281.8px;width:600px;text-align:center;top:184.5px;height:15px;line-height:15px;font-size:10.4px;color:#44604f;font-weight:normal;white-space:nowrap;-webkit-text-stroke:0.15px #44604f;">1</div>
<div style="position:absolute;left:-281.8px;width:600px;text-align:center;top:204.0px;height:15px;line-height:15px;font-size:10.4px;color:#44604f;font-weight:normal;white-space:nowrap;-webkit-text-stroke:0.15px #44604f;">2</div>
<div style="position:absolute;left:-281.8px;width:600px;text-align:center;top:223.5px;height:15px;line-height:15px;font-size:10.4px;color:#44604f;font-weight:normal;white-space:nowrap;-webkit-text-stroke:0.15px #44604f;">3</div>
<div style="position:absolute;left:-281.8px;width:600px;text-align:center;top:242.5px;height:15px;line-height:15px;font-size:10.4px;color:#44604f;font-weight:normal;white-space:nowrap;-webkit-text-stroke:0.15px #44604f;">4</div>
<div style="position:absolute;left:-281.8px;width:600px;text-align:center;top:262.0px;height:15px;line-height:15px;font-size:10.4px;color:#44604f;font-weight:normal;white-space:nowrap;-webkit-text-stroke:0.15px #44604f;">5</div>
<div style="position:absolute;left:-281.8px;width:600px;text-align:center;top:281.5px;height:15px;line-height:15px;font-size:10.4px;color:#44604f;font-weight:normal;white-space:nowrap;-webkit-text-stroke:0.15px #44604f;">6</div>
<div style="position:absolute;left:-281.8px;width:600px;text-align:center;top:300.5px;height:15px;line-height:15px;font-size:10.4px;color:#44604f;font-weight:normal;white-space:nowrap;-webkit-text-stroke:0.15px #44604f;">7</div>
<div style="position:absolute;left:-281.8px;width:600px;text-align:center;top:320.0px;height:15px;line-height:15px;font-size:10.4px;color:#44604f;font-weight:normal;white-space:nowrap;-webkit-text-stroke:0.15px #44604f;">8</div>
<div style="position:absolute;left:-281.8px;width:600px;text-align:center;top:339.5px;height:15px;line-height:15px;font-size:10.4px;color:#44604f;font-weight:normal;white-space:nowrap;-webkit-text-stroke:0.15px #44604f;">9</div>
<div style="position:absolute;left:-281.8px;width:600px;text-align:center;top:359.5px;height:15px;line-height:15px;font-size:10.4px;color:#44604f;font-weight:normal;white-space:nowrap;-webkit-text-stroke:0.15px #44604f;">10</div>
<div style="position:absolute;left:-281.8px;width:600px;text-align:center;top:378.5px;height:15px;line-height:15px;font-size:10.4px;color:#44604f;font-weight:normal;white-space:nowrap;-webkit-text-stroke:0.15px #44604f;">11</div>
<div style="position:absolute;left:-281.8px;width:600px;text-align:center;top:395.5px;height:15px;line-height:15px;font-size:10.4px;color:#44604f;font-weight:normal;white-space:nowrap;-webkit-text-stroke:0.15px #44604f;">12</div>
<div style="position:absolute;left:-281.8px;width:600px;text-align:center;top:412.0px;height:15px;line-height:15px;font-size:10.4px;color:#44604f;font-weight:normal;white-space:nowrap;-webkit-text-stroke:0.15px #44604f;">13</div>
<div style="position:absolute;left:-281.8px;width:600px;text-align:center;top:428.0px;height:15px;line-height:15px;font-size:10.4px;color:#44604f;font-weight:normal;white-space:nowrap;-webkit-text-stroke:0.15px #44604f;">14</div>
<div style="position:absolute;left:-281.8px;width:600px;text-align:center;top:444.0px;height:15px;line-height:15px;font-size:10.4px;color:#44604f;font-weight:normal;white-space:nowrap;-webkit-text-stroke:0.15px #44604f;">15</div>
<div style="position:absolute;left:-281.8px;width:600px;text-align:center;top:460.0px;height:15px;line-height:15px;font-size:10.4px;color:#44604f;font-weight:normal;white-space:nowrap;-webkit-text-stroke:0.15px #44604f;">16</div>
<div style="position:absolute;left:-281.8px;width:600px;text-align:center;top:476.5px;height:15px;line-height:15px;font-size:10.4px;color:#44604f;font-weight:normal;white-space:nowrap;-webkit-text-stroke:0.15px #44604f;">17</div>
<div style="position:absolute;left:-281.8px;width:600px;text-align:center;top:493.0px;height:15px;line-height:15px;font-size:10.4px;color:#44604f;font-weight:normal;white-space:nowrap;-webkit-text-stroke:0.15px #44604f;">18</div>
<div style="position:absolute;left:-281.8px;width:600px;text-align:center;top:509.0px;height:15px;line-height:15px;font-size:10.4px;color:#44604f;font-weight:normal;white-space:nowrap;-webkit-text-stroke:0.15px #44604f;">19</div>
<div style="position:absolute;left:-281.8px;width:600px;text-align:center;top:525.5px;height:15px;line-height:15px;font-size:10.4px;color:#44604f;font-weight:normal;white-space:nowrap;-webkit-text-stroke:0.15px #44604f;">20</div>
<div style="position:absolute;left:56px;top:181px;width:1px;height:174px;background:#262e29;"></div>
<div style="position:absolute;left:217px;top:181px;width:1px;height:174px;background:#262e29;"></div>
<div style="position:absolute;left:326px;top:181px;width:1px;height:174px;background:#262e29;"></div>
<div style="position:absolute;left:435px;top:181px;width:1px;height:174px;background:#262e29;"></div>
<div style="position:absolute;left:516px;top:181px;width:1px;height:174px;background:#262e29;"></div>
<div style="position:absolute;left:29px;top:200px;width:488px;height:1px;background:#262e29;"></div>
<div style="position:absolute;left:29px;top:220px;width:488px;height:1px;background:#262e29;"></div>
<div style="position:absolute;left:29px;top:239px;width:488px;height:1px;background:#262e29;"></div>
<div style="position:absolute;left:29px;top:258px;width:488px;height:1px;background:#262e29;"></div>
<div style="position:absolute;left:29px;top:278px;width:488px;height:1px;background:#262e29;"></div>
<div style="position:absolute;left:29px;top:297px;width:488px;height:1px;background:#262e29;"></div>
<div style="position:absolute;left:29px;top:316px;width:488px;height:1px;background:#262e29;"></div>
<div style="position:absolute;left:29px;top:336px;width:488px;height:1px;background:#262e29;"></div>
<div style="position:absolute;left:29px;top:355px;width:488px;height:1px;background:#262e29;"></div>
<div style="position:absolute;left:31.00px;top:181.70px;height:18px;line-height:18px;font-size:13px;color:#000;font-weight:bold;white-space:nowrap;-webkit-text-stroke:0.25px #000;transform:scaleX(0.9383);transform-origin:0 0;">№</div>
<div style="position:absolute;left:59.30px;top:181.70px;height:18px;line-height:18px;font-size:13px;color:#000;font-weight:bold;white-space:nowrap;-webkit-text-stroke:0.25px #000;transform:scaleX(0.9857);transform-origin:0 0;">Наименование</div>
<div style="position:absolute;left:222.50px;top:181.70px;height:18px;line-height:18px;font-size:13px;color:#000;font-weight:bold;white-space:nowrap;-webkit-text-stroke:0.25px #000;transform:scaleX(0.9407);transform-origin:0 0;">Стоимость, руб.</div>
<div style="position:absolute;left:332.30px;top:181.70px;height:18px;line-height:18px;font-size:13px;color:#000;font-weight:bold;white-space:nowrap;-webkit-text-stroke:0.25px #000;transform:scaleX(0.9517);transform-origin:0 0;">Количество, шт.</div>
<div style="position:absolute;left:456.70px;top:181.70px;height:18px;line-height:18px;font-size:13px;color:#000;font-weight:bold;white-space:nowrap;-webkit-text-stroke:0.25px #000;transform:scaleX(0.9588);transform-origin:0 0;">Итого:</div>
<div style="position:absolute;right:1146.90px;top:201.70px;height:18px;line-height:18px;font-size:12.9px;letter-spacing:-0.122px;color:#000;white-space:nowrap;-webkit-text-stroke:0.25px #000;">1<span style="letter-spacing:0">​</span></div>
<div style="position:absolute;left:59.30px;top:201.70px;height:18px;line-height:18px;font-size:13px;color:#000;font-weight:normal;white-space:nowrap;-webkit-text-stroke:0.25px #000;transform:scaleX(0.9570);transform-origin:0 0;">Стол письменный</div>
<div style="position:absolute;right:876.70px;top:201.70px;height:18px;line-height:18px;font-size:12.9px;letter-spacing:-0.122px;color:#000;white-space:nowrap;-webkit-text-stroke:0.25px #000;">8<span style="display:inline-block;width:3.00px"></span>990<span style="letter-spacing:0">​</span></div>
<div style="position:absolute;right:767.60px;top:201.70px;height:18px;line-height:18px;font-size:12.9px;letter-spacing:-0.122px;color:#000;white-space:nowrap;-webkit-text-stroke:0.25px #000;">3<span style="letter-spacing:0">​</span></div>
<div style="position:absolute;right:686.40px;top:201.70px;height:18px;line-height:18px;font-size:12.9px;letter-spacing:-0.122px;color:#000;white-space:nowrap;-webkit-text-stroke:0.25px #000;">26<span style="display:inline-block;width:3.00px"></span>970<span style="letter-spacing:0">​</span></div>
<div style="position:absolute;right:1146.90px;top:220.70px;height:18px;line-height:18px;font-size:12.9px;letter-spacing:-0.122px;color:#000;white-space:nowrap;-webkit-text-stroke:0.25px #000;">2<span style="letter-spacing:0">​</span></div>
<div style="position:absolute;left:59.30px;top:220.70px;height:18px;line-height:18px;font-size:13px;color:#000;font-weight:normal;white-space:nowrap;-webkit-text-stroke:0.25px #000;transform:scaleX(0.9568);transform-origin:0 0;">Кресло офисное</div>
<div style="position:absolute;right:876.70px;top:220.70px;height:18px;line-height:18px;font-size:12.9px;letter-spacing:-0.122px;color:#000;white-space:nowrap;-webkit-text-stroke:0.25px #000;">4<span style="display:inline-block;width:3.00px"></span>990<span style="letter-spacing:0">​</span></div>
<div style="position:absolute;right:767.60px;top:220.70px;height:18px;line-height:18px;font-size:12.9px;letter-spacing:-0.122px;color:#000;white-space:nowrap;-webkit-text-stroke:0.25px #000;">5<span style="letter-spacing:0">​</span></div>
<div style="position:absolute;right:686.40px;top:220.70px;height:18px;line-height:18px;font-size:12.9px;letter-spacing:-0.122px;color:#000;white-space:nowrap;-webkit-text-stroke:0.25px #000;">24<span style="display:inline-block;width:3.00px"></span>950<span style="letter-spacing:0">​</span></div>
<div style="position:absolute;right:1146.90px;top:239.70px;height:18px;line-height:18px;font-size:12.9px;letter-spacing:-0.122px;color:#000;white-space:nowrap;-webkit-text-stroke:0.25px #000;">3<span style="letter-spacing:0">​</span></div>
<div style="position:absolute;left:59.30px;top:239.70px;height:18px;line-height:18px;font-size:13px;color:#000;font-weight:normal;white-space:nowrap;-webkit-text-stroke:0.25px #000;transform:scaleX(0.9677);transform-origin:0 0;">Тумбочка</div>
<div style="position:absolute;right:876.70px;top:239.70px;height:18px;line-height:18px;font-size:12.9px;letter-spacing:-0.122px;color:#000;white-space:nowrap;-webkit-text-stroke:0.25px #000;">3<span style="display:inline-block;width:3.00px"></span>990<span style="letter-spacing:0">​</span></div>
<div style="position:absolute;right:767.60px;top:239.70px;height:18px;line-height:18px;font-size:12.9px;letter-spacing:-0.122px;color:#000;white-space:nowrap;-webkit-text-stroke:0.25px #000;">2<span style="letter-spacing:0">​</span></div>
<div style="position:absolute;right:686.40px;top:239.70px;height:18px;line-height:18px;font-size:12.9px;letter-spacing:-0.122px;color:#000;white-space:nowrap;-webkit-text-stroke:0.25px #000;">7<span style="display:inline-block;width:3.00px"></span>980<span style="letter-spacing:0">​</span></div>
<div style="position:absolute;right:1146.90px;top:259.70px;height:18px;line-height:18px;font-size:12.9px;letter-spacing:-0.122px;color:#000;white-space:nowrap;-webkit-text-stroke:0.25px #000;">4<span style="letter-spacing:0">​</span></div>
<div style="position:absolute;left:59.30px;top:259.70px;height:18px;line-height:18px;font-size:13px;color:#000;font-weight:normal;white-space:nowrap;-webkit-text-stroke:0.25px #000;transform:scaleX(1.0002);transform-origin:0 0;">Канцелярский набор</div>
<div style="position:absolute;right:876.69px;top:259.70px;height:18px;line-height:18px;font-size:12.9px;letter-spacing:-0.122px;color:#000;white-space:nowrap;-webkit-text-stroke:0.25px #000;">649<span style="letter-spacing:0">​</span></div>
<div style="position:absolute;right:767.60px;top:259.70px;height:18px;line-height:18px;font-size:12.9px;letter-spacing:-0.122px;color:#000;white-space:nowrap;-webkit-text-stroke:0.25px #000;">6<span style="letter-spacing:0">​</span></div>
<div style="position:absolute;right:686.40px;top:259.70px;height:18px;line-height:18px;font-size:12.9px;letter-spacing:-0.122px;color:#000;white-space:nowrap;-webkit-text-stroke:0.25px #000;">3<span style="display:inline-block;width:3.00px"></span>894<span style="letter-spacing:0">​</span></div>
<div style="position:absolute;right:1146.90px;top:278.70px;height:18px;line-height:18px;font-size:12.9px;letter-spacing:-0.122px;color:#000;white-space:nowrap;-webkit-text-stroke:0.25px #000;">5<span style="letter-spacing:0">​</span></div>
<div style="position:absolute;left:59.30px;top:278.70px;height:18px;line-height:18px;font-size:13px;color:#000;font-weight:normal;white-space:nowrap;-webkit-text-stroke:0.25px #000;transform:scaleX(0.9660);transform-origin:0 0;">Системный блок</div>
<div style="position:absolute;right:876.70px;top:278.70px;height:18px;line-height:18px;font-size:12.9px;letter-spacing:-0.122px;color:#000;white-space:nowrap;-webkit-text-stroke:0.25px #000;">24<span style="display:inline-block;width:3.00px"></span>400<span style="letter-spacing:0">​</span></div>
<div style="position:absolute;right:767.60px;top:278.70px;height:18px;line-height:18px;font-size:12.9px;letter-spacing:-0.122px;color:#000;white-space:nowrap;-webkit-text-stroke:0.25px #000;">2<span style="letter-spacing:0">​</span></div>
<div style="position:absolute;right:686.40px;top:278.70px;height:18px;line-height:18px;font-size:12.9px;letter-spacing:-0.122px;color:#000;white-space:nowrap;-webkit-text-stroke:0.25px #000;">48<span style="display:inline-block;width:3.00px"></span>800<span style="letter-spacing:0">​</span></div>
<div style="position:absolute;right:1146.90px;top:297.70px;height:18px;line-height:18px;font-size:12.9px;letter-spacing:-0.122px;color:#000;white-space:nowrap;-webkit-text-stroke:0.25px #000;">6<span style="letter-spacing:0">​</span></div>
<div style="position:absolute;left:59.30px;top:297.70px;height:18px;line-height:18px;font-size:13px;color:#000;font-weight:normal;white-space:nowrap;-webkit-text-stroke:0.25px #000;transform:scaleX(0.9941);transform-origin:0 0;">Монитор</div>
<div style="position:absolute;right:876.70px;top:297.70px;height:18px;line-height:18px;font-size:12.9px;letter-spacing:-0.122px;color:#000;white-space:nowrap;-webkit-text-stroke:0.25px #000;">12<span style="display:inline-block;width:3.00px"></span>600<span style="letter-spacing:0">​</span></div>
<div style="position:absolute;right:767.60px;top:297.70px;height:18px;line-height:18px;font-size:12.9px;letter-spacing:-0.122px;color:#000;white-space:nowrap;-webkit-text-stroke:0.25px #000;">4<span style="letter-spacing:0">​</span></div>
<div style="position:absolute;right:686.40px;top:297.70px;height:18px;line-height:18px;font-size:12.9px;letter-spacing:-0.122px;color:#000;white-space:nowrap;-webkit-text-stroke:0.25px #000;">50<span style="display:inline-block;width:3.00px"></span>400<span style="letter-spacing:0">​</span></div>
<div style="position:absolute;right:1146.90px;top:317.70px;height:18px;line-height:18px;font-size:12.9px;letter-spacing:-0.122px;color:#000;white-space:nowrap;-webkit-text-stroke:0.25px #000;">7<span style="letter-spacing:0">​</span></div>
<div style="position:absolute;left:59.30px;top:317.70px;height:18px;line-height:18px;font-size:13px;color:#000;font-weight:normal;white-space:nowrap;-webkit-text-stroke:0.25px #000;transform:scaleX(0.9713);transform-origin:0 0;">Клавиатура</div>
<div style="position:absolute;right:876.69px;top:317.70px;height:18px;line-height:18px;font-size:12.9px;letter-spacing:-0.122px;color:#000;white-space:nowrap;-webkit-text-stroke:0.25px #000;">999<span style="letter-spacing:0">​</span></div>
<div style="position:absolute;right:767.60px;top:317.70px;height:18px;line-height:18px;font-size:12.9px;letter-spacing:-0.122px;color:#000;white-space:nowrap;-webkit-text-stroke:0.25px #000;">6<span style="letter-spacing:0">​</span></div>
<div style="position:absolute;right:686.40px;top:317.70px;height:18px;line-height:18px;font-size:12.9px;letter-spacing:-0.122px;color:#000;white-space:nowrap;-webkit-text-stroke:0.25px #000;">5<span style="display:inline-block;width:3.00px"></span>994<span style="letter-spacing:0">​</span></div>
<div style="position:absolute;right:1146.90px;top:336.70px;height:18px;line-height:18px;font-size:12.9px;letter-spacing:-0.122px;color:#000;white-space:nowrap;-webkit-text-stroke:0.25px #000;">8<span style="letter-spacing:0">​</span></div>
<div style="position:absolute;left:59.30px;top:336.70px;height:18px;line-height:18px;font-size:13px;color:#000;font-weight:normal;white-space:nowrap;-webkit-text-stroke:0.25px #000;transform:scaleX(0.9873);transform-origin:0 0;">Мышь</div>
<div style="position:absolute;right:876.69px;top:336.70px;height:18px;line-height:18px;font-size:12.9px;letter-spacing:-0.122px;color:#000;white-space:nowrap;-webkit-text-stroke:0.25px #000;">799<span style="letter-spacing:0">​</span></div>
<div style="position:absolute;right:767.60px;top:336.70px;height:18px;line-height:18px;font-size:12.9px;letter-spacing:-0.122px;color:#000;white-space:nowrap;-webkit-text-stroke:0.25px #000;">6<span style="letter-spacing:0">​</span></div>
<div style="position:absolute;right:686.40px;top:336.70px;height:18px;line-height:18px;font-size:12.9px;letter-spacing:-0.122px;color:#000;white-space:nowrap;-webkit-text-stroke:0.25px #000;">4<span style="display:inline-block;width:3.00px"></span>794<span style="letter-spacing:0">​</span></div>
<div style="position:absolute;right:986.00px;top:357.70px;height:18px;line-height:18px;font-size:13px;color:#000;font-weight:bold;white-space:nowrap;-webkit-text-stroke:0.25px #000;transform:scaleX(0.9588);transform-origin:100% 0;">Итого:</div>
<div style="position:absolute;right:686.40px;top:357.50px;height:18px;line-height:18px;font-size:12.9px;letter-spacing:-0.122px;color:#000;white-space:nowrap;-webkit-text-stroke:0.25px #000;">173<span style="display:inline-block;width:3.00px"></span>782<span style="letter-spacing:0">​</span></div>
<div style="position:absolute;left:434.3px;top:354.1px;width:83.8px;height:23.9px;border:3px solid #fe0000;box-sizing:border-box;"></div>
<div style="position:absolute;left:0px;top:532px;width:1200px;height:27px;background:#efefef;border-top:1px solid #d9d9d9;box-sizing:border-box;"></div>
<div style="position:absolute;left:68px;top:531px;width:230px;height:24px;background:#fff;border-radius:0 0 4px 4px;box-shadow:0 1px 0.5px rgba(0,0,0,0.18);"></div>
<svg style="position:absolute;left:21.5px;top:542px;" width="8" height="9" viewBox="0 0 8 9"><path d="M7.5 0 V9 L0 4.5 Z" fill="#a5aea9"/></svg>
<svg style="position:absolute;left:45px;top:542px;" width="8" height="9" viewBox="0 0 8 9"><path d="M0.5 0 V9 L8 4.5 Z" fill="#a5aea9"/></svg>
<div style="position:absolute;left:91.20px;top:534.20px;height:18px;line-height:18px;font-size:12.5px;color:#4e7a60;font-weight:bold;white-space:nowrap;-webkit-text-stroke:0.1px #4e7a60;transform:scaleX(0.9659);transform-origin:0 0;">Подсчет суммы (microexcel.ru)</div>
<svg style="position:absolute;left:312px;top:540px;" width="11" height="11" viewBox="0 0 11 11"><path d="M5.5 0.5 V10.5 M0.5 5.5 H10.5" stroke="#5b6f63" stroke-width="1.8"/></svg>
<div style="position:absolute;left:336px;top:533px;width:1px;height:21px;background:#d6d6d6;"></div>
<div style="position:absolute;left:0px;top:558px;width:1200px;height:23px;background:linear-gradient(#e2e2e2,#dcdcdc);border-top:1px solid #cfcfcf;box-sizing:border-box;"></div>
<div style="position:absolute;left:32.00px;top:563.00px;height:16px;line-height:16px;font-size:11.6px;color:#58695f;font-weight:normal;white-space:nowrap;-webkit-text-stroke:0.05px #58695f;transform:scaleX(1.0888);transform-origin:0 0;">Готово</div>
<div style="position:absolute;left:868px;top:559px;width:37px;height:22.5px;background:#a2aca6;"></div>
<svg style="position:absolute;left:879px;top:562px;" width="16" height="16" viewBox="0 0 16 16"><rect x="0.5" y="0.5" width="15" height="15" rx="1.5" fill="#fff"/><path d="M4.25 0 V16 M8 0 V16 M11.75 0 V16 M0 4.25 H16 M0 8 H16 M0 11.75 H16" stroke="#a2aca6" stroke-width="1.2"/></svg>
<svg style="position:absolute;left:915.5px;top:563px;" width="16" height="14" viewBox="0 0 16 14"><rect x="0.8" y="0.8" width="14.4" height="12.4" fill="none" stroke="#7d8c84" stroke-width="1.5"/><rect x="4" y="0.8" width="8" height="12.4" fill="#fff" stroke="#7d8c84" stroke-width="1.2"/></svg>
<svg style="position:absolute;left:951.5px;top:563px;" width="15" height="14" viewBox="0 0 15 14"><rect x="0.8" y="0.8" width="13.4" height="12.4" fill="none" stroke="#7d8c84" stroke-width="1.5"/><path d="M5 0.8 V7.5 H10 V0.8" fill="none" stroke="#7d8c84" stroke-width="1.3"/></svg>
<div style="position:absolute;left:984.7px;top:569.5px;width:8.7px;height:2px;background:#5b6e63;"></div>
<div style="position:absolute;left:1001.6px;top:569px;width:99px;height:3px;background:#9aa59f;border-radius:1.5px;"></div>
<div style="position:absolute;left:1045.5px;top:564.5px;width:11px;height:11px;background:#fff;border-radius:50%;box-shadow:0 0 1px rgba(0,0,0,0.35);"></div>
<svg style="position:absolute;left:1109px;top:566px;" width="9" height="9" viewBox="0 0 9 9"><path d="M4.5 0 V9 M0 4.5 H9" stroke="#5b6e63" stroke-width="2"/></svg>
<div style="position:absolute;left:1134.00px;top:563.00px;height:16px;line-height:16px;font-size:11.6px;color:#58695f;font-weight:normal;white-space:nowrap;-webkit-text-stroke:0.05px #58695f;transform:scaleX(1.0339);transform-origin:0 0;">100 %</div>
</div></div>
</body></html>
